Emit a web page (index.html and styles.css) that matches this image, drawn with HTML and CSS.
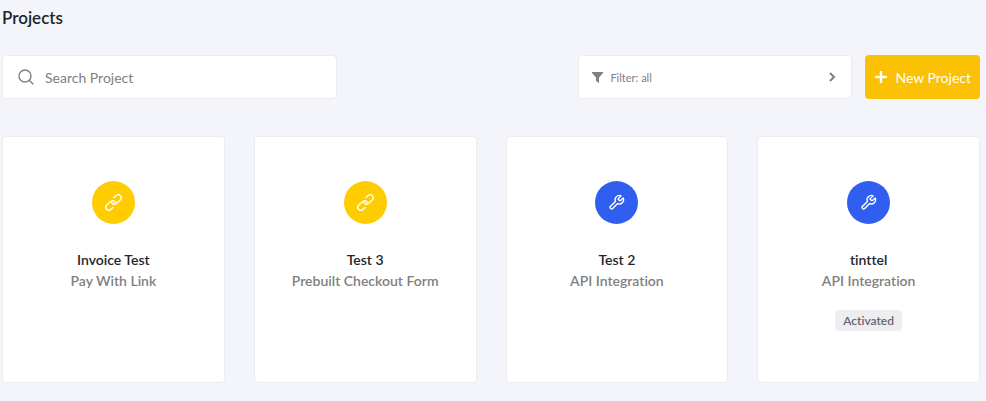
FILE: index.html
```html
<!DOCTYPE html>
<html lang="en">
<head>
    <meta charset="UTF-8">
    <meta name="viewport" content="width=device-width, initial-scale=1.0">
    <title>Projects</title>
    <link rel="stylesheet" href="styles.css">
</head>
<body>
    <!-- Shared icons -->
    <svg class="icon-sprite" aria-hidden="true">
        <symbol id="icon-link" viewBox="0 0 24 24">
            <g transform="translate(12 12) rotate(-43)">
                <path d="M5.2-4.6h4.2a4.2 4.2 0 0 1 0 8.4h-7.4a4.2 4.2 0 0 1-4-5.4"/>
                <path d="M-5.2 4.6h-4.2a4.2 4.2 0 0 1 0-8.4h7.4a4.2 4.2 0 0 1 4 5.4"/>
            </g>
        </symbol>
        <symbol id="icon-wrench" viewBox="0 0 24 24">
            <path d="M14.7 6.3a1 1 0 0 0 0 1.4l1.6 1.6a1 1 0 0 0 1.4 0l3.77-3.77a6 6 0 0 1-7.94 7.94l-6.91 6.91a2.12 2.12 0 0 1-3-3l6.91-6.91a6 6 0 0 1 7.94-7.94l-3.76 3.76z"/>
        </symbol>
    </svg>

    <main class="projects">
        <h1 class="page-title">Projects</h1>

        <div class="toolbar">
            <label class="search-box">
                <svg class="search-icon" viewBox="0 0 16 16" aria-hidden="true">
                    <circle cx="7" cy="7" r="6"/>
                    <path d="M11.4 11.4L15 15"/>
                </svg>
                <input type="text" class="search-input" placeholder="Search Project" aria-label="Search Project">
            </label>

            <button type="button" class="filter-btn">
                <svg class="filter-icon" viewBox="0 0 11 11" aria-hidden="true">
                    <path d="M0 0h11v1L7 5.5V11L4 9V5.5L0 1z"/>
                </svg>
                <span class="filter-text">Filter: all</span>
                <svg class="chevron-icon" viewBox="0 0 8 10" aria-hidden="true">
                    <path d="M2 1l4 4-4 4"/>
                </svg>
            </button>

            <button type="button" class="new-btn">
                <svg class="plus-icon" viewBox="0 0 12 12" aria-hidden="true">
                    <path d="M6 1v10M1 6h10"/>
                </svg>
                New Project
            </button>
        </div>

        <div class="project-grid">
            <article class="project-card">
                <div class="project-icon link">
                    <svg><use href="#icon-link"/></svg>
                </div>
                <h2 class="project-name">Invoice Test</h2>
                <p class="project-type">Pay With Link</p>
            </article>
            <article class="project-card">
                <div class="project-icon link">
                    <svg><use href="#icon-link"/></svg>
                </div>
                <h2 class="project-name">Test 3</h2>
                <p class="project-type">Prebuilt Checkout Form</p>
            </article>
            <article class="project-card">
                <div class="project-icon api">
                    <svg><use href="#icon-wrench"/></svg>
                </div>
                <h2 class="project-name">Test 2</h2>
                <p class="project-type">API Integration</p>
            </article>
            <article class="project-card">
                <div class="project-icon api">
                    <svg><use href="#icon-wrench"/></svg>
                </div>
                <h2 class="project-name">tinttel</h2>
                <p class="project-type">API Integration</p>
                <span class="status">Activated</span>
            </article>
        </div>
    </main>
</body>
</html>
```
FILE: styles.css
```css
* {
    box-sizing: border-box;
}

body {
    margin: 0;
    font-family: Lato, "Open Sans", sans-serif;
    font-variant-ligatures: none;
    background: #f4f5fb;
    color: #212529;
}

button, input {
    font-family: inherit;
}

svg {
    fill: none;
    stroke: currentColor;
    stroke-width: 2;
    stroke-linecap: round;
    stroke-linejoin: round;
    flex: none;
}

.icon-sprite {
    display: none;
}

.projects {
    padding: 8px 6px 18px 2px;
}

.page-title {
    margin: 0 0 27px;
    font-size: 17px;
    font-weight: 600;
    line-height: 20px;
}

.toolbar {
    display: flex;
    align-items: center;
    gap: 13px;
    margin-bottom: 37px;
}

.search-box, .filter-btn {
    display: flex;
    align-items: center;
    height: 44px;
    background: white;
    border: 1px solid #ebecf0;
    border-radius: 4px;
    color: #808080;
}

.search-box {
    flex: 0 1 335px;
    gap: 11px;
    margin-right: auto;
    padding: 0 15px;
}

.search-icon {
    width: 16px;
    height: 16px;
    stroke-width: 1.4;
}

.search-input {
    flex: 1;
    min-width: 0;
    padding: 0;
    border: none;
    outline: none;
    background: none;
    font-size: 14px;
    color: #333;
}

.search-input::placeholder {
    color: #808080;
    opacity: 1;
}

.filter-btn {
    flex: 0 1 274px;
    gap: 7px;
    padding: 0 15px 0 13px;
    font-size: 11px;
    cursor: pointer;
}

.filter-icon {
    width: 11px;
    height: 11px;
    fill: currentColor;
    stroke: none;
}

.filter-text {
    flex: 1;
    text-align: left;
}

.chevron-icon {
    width: 8px;
    height: 10px;
    stroke-linecap: butt;
    stroke-linejoin: miter;
}

.new-btn {
    display: flex;
    align-items: center;
    gap: 8px;
    height: 44px;
    padding: 0 9px 0 10px;
    border: none;
    border-radius: 4px;
    background: #fac105;
    color: white;
    font-size: 14px;
    white-space: nowrap;
    cursor: pointer;
}

.plus-icon {
    width: 12px;
    height: 12px;
    stroke-width: 2.4;
}

.project-grid {
    display: grid;
    grid-template-columns: repeat(4, 1fr);
    gap: 29px;
}

.project-card {
    display: flex;
    flex-direction: column;
    align-items: center;
    min-height: 247px;
    padding: 44px 12px;
    background: white;
    border: 1px solid #ebecf0;
    border-radius: 4px;
    text-align: center;
}

.project-icon {
    display: flex;
    justify-content: center;
    align-items: center;
    width: 43px;
    height: 43px;
    margin-bottom: 25px;
    border-radius: 50%;
    color: white;
}

.project-icon svg {
    width: 17px;
    height: 17px;
}

.project-icon.link {
    background: #ffcc00;
}

.project-icon.api {
    background: #305ff0;
}

.project-name, .project-type {
    margin: 0;
    font-size: 14px;
    font-weight: 600;
    line-height: 21px;
}

.project-type {
    color: #808080;
}

.status {
    margin-top: 19px;
    padding: 0 8px;
    border-radius: 4px;
    background: #eeeef0;
    color: #666475;
    font-size: 12px;
    font-weight: 600;
    line-height: 21px;
}
```
